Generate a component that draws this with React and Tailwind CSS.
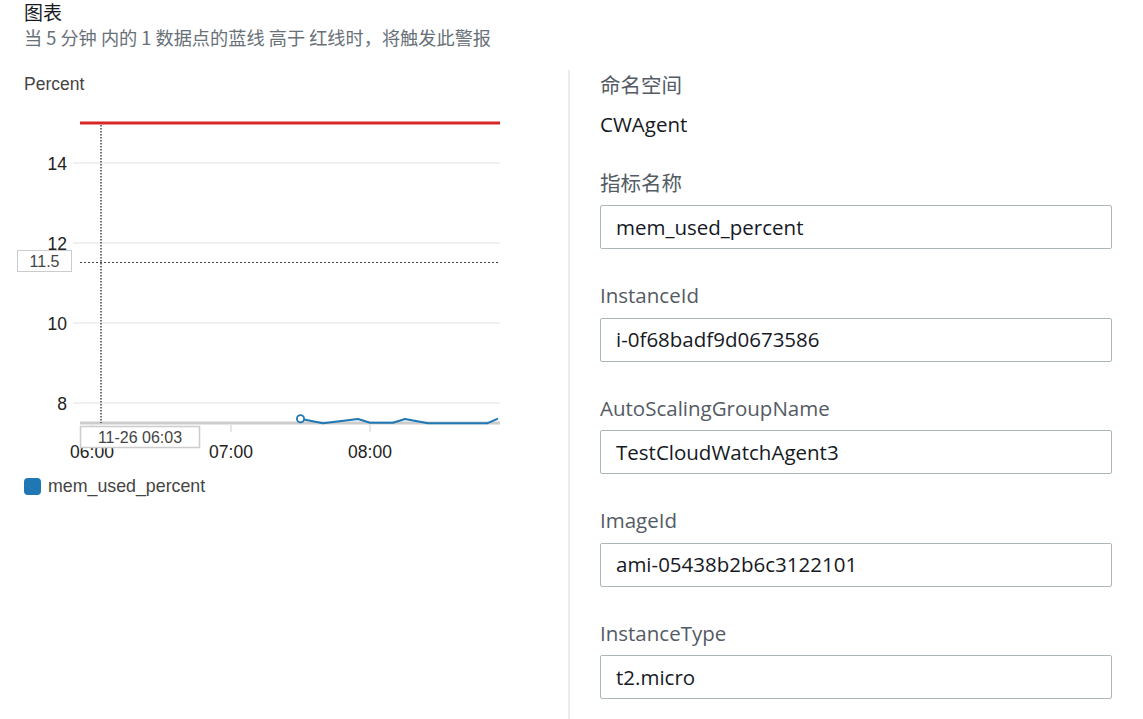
import React from "react";

const fields = [
  ["InstanceId", "i-0f68badf9d0673586"],
  ["AutoScalingGroupName", "TestCloudWatchAgent3"],
  ["ImageId", "ami-05438b2b6c3122101"],
  ["InstanceType", "t2.micro"],
];

function Chart() {
  const pts = [
    [300, 418.7],
    [323, 423.3],
    [358, 419],
    [370, 422.7],
    [393, 422.7],
    [405, 419],
    [428, 423.3],
    [487, 423.3],
    [498, 418.7],
  ];
  const grid = [
    [163, "14"],
    [243, "12"],
    [323, "10"],
    [403, "8"],
  ];
  const font = { fontFamily: "'Liberation Sans', Arial, sans-serif" };
  return (
    <svg width="520" height="376" viewBox="0 94 520 376" className="block">
      {grid.map(([y, l]) => (
        <g key={l}>
          <line x1="73" x2="500" y1={y} y2={y} stroke="#ebebeb" strokeWidth="1.5" />
          <text x="67" y={y + 6.5} textAnchor="end" fontSize="17.5" fill="#222" style={font}>
            {l}
          </text>
        </g>
      ))}
      <line x1="80" x2="500" y1="123" y2="123" stroke="#d62728" strokeWidth="3" />
      <line x1="80" x2="500" y1="423" y2="423" stroke="#cccccc" strokeWidth="3" />
      {[92, 231, 370].map((x) => (
        <line key={x} x1={x} x2={x} y1="424" y2="432" stroke="#e6e6e6" strokeWidth="2" />
      ))}
      {[
        [92, "06:00"],
        [231, "07:00"],
        [370, "08:00"],
      ].map(([x, l]) => (
        <text key={l} x={x} y="458" textAnchor="middle" fontSize="17.5" fill="#222" style={font}>
          {l}
        </text>
      ))}
      <line x1="80" x2="500" y1="262.5" y2="262.5" stroke="#444" strokeWidth="1" strokeDasharray="2 2" />
      <line x1="101" x2="101" y1="125" y2="423" stroke="#444" strokeWidth="1.5" strokeDasharray="1.5 1.5" />
      <polyline
        points={pts.map((p) => p.join(",")).join(" ")}
        fill="none"
        stroke="#1f77b4"
        strokeWidth="2"
        strokeLinejoin="round"
      />
      <circle cx="300.5" cy="418.7" r="3.6" fill="#fff" stroke="#1f77b4" strokeWidth="1.8" />
      <rect x="17.5" y="250.5" width="54" height="21" fill="#fff" stroke="#cccccc" strokeWidth="1" />
      <text x="44.5" y="267" textAnchor="middle" fontSize="16" fill="#444" style={font}>
        11.5
      </text>
      <rect x="80.5" y="426.5" width="119" height="21" fill="#fff" stroke="#cccccc" strokeWidth="1.5" />
      <text x="140" y="443" textAnchor="middle" fontSize="16" fill="#444" style={font}>
        11-26 06:03
      </text>
    </svg>
  );
}

function Field({ label, value }) {
  return (
    <div className="mt-[34px]">
      <div className="h-[24px] leading-[24px] text-[20.5px] text-[#545b64]">{label}</div>
      <div className="mt-[10.5px] h-[44px] border border-[#aab7b8] rounded-[2px] pl-[15px] flex items-center text-[20.5px] text-[#16191f]">
        {value}
      </div>
    </div>
  );
}

export default function App() {
  return (
    <div className="w-[1143px] h-[719px] bg-white flex overflow-hidden">
      <div className="w-[568px] shrink-0">
        <div
          className="pl-6"
          style={{ fontFamily: "'Noto Sans CJK SC', 'Liberation Sans', sans-serif" }}
        >
          <div className="text-[19px] leading-[24px] text-[#16191f]">图表</div>
          <div className="mt-[1px] text-[18.2px] leading-[24px] text-[#687078] whitespace-nowrap">
            当 5 分钟 内的 1 数据点的蓝线 高于 红线时，将触发此警报
          </div>
        </div>
        <div
          className="pl-6 mt-[25px] text-[17.5px] leading-[20px] text-[#444]"
          style={{ fontFamily: "'Liberation Sans', Arial, sans-serif" }}
        >
          Percent
        </div>
        <Chart />
        <div
          className="pl-6 mt-[7px] flex items-center gap-[7px] text-[17.8px] leading-[18px] text-[#444]"
          style={{ fontFamily: "'Liberation Sans', Arial, sans-serif" }}
        >
          <span className="w-[17px] h-[17px] rounded-[4px] bg-[#1f77b4] inline-block" />
          <span>mem_used_percent</span>
        </div>
      </div>
      <div
        className="mt-[70px] border-l-2 border-[#eaeded] flex-1 pl-[30px] pr-[31px]"
        style={{ fontFamily: "'Open Sans', 'Noto Sans CJK SC', sans-serif" }}
      >
        <div className="pt-[3px] h-[24px] leading-[24px] text-[20.5px] text-[#545b64] box-content">命名空间</div>
        <div className="mt-[15px] h-[24px] leading-[24px] text-[20.5px] text-[#16191f]">CWAgent</div>
        <div className="mt-[35px] h-[24px] leading-[24px] text-[20.5px] text-[#545b64]">指标名称</div>
        <div className="mt-[10px] h-[44px] border border-[#aab7b8] rounded-[2px] pl-[15px] flex items-center text-[20.5px] text-[#16191f]">
          mem_used_percent
        </div>
        {fields.map(([l, v]) => (
          <Field key={l} label={l} value={v} />
        ))}
      </div>
    </div>
  );
}
